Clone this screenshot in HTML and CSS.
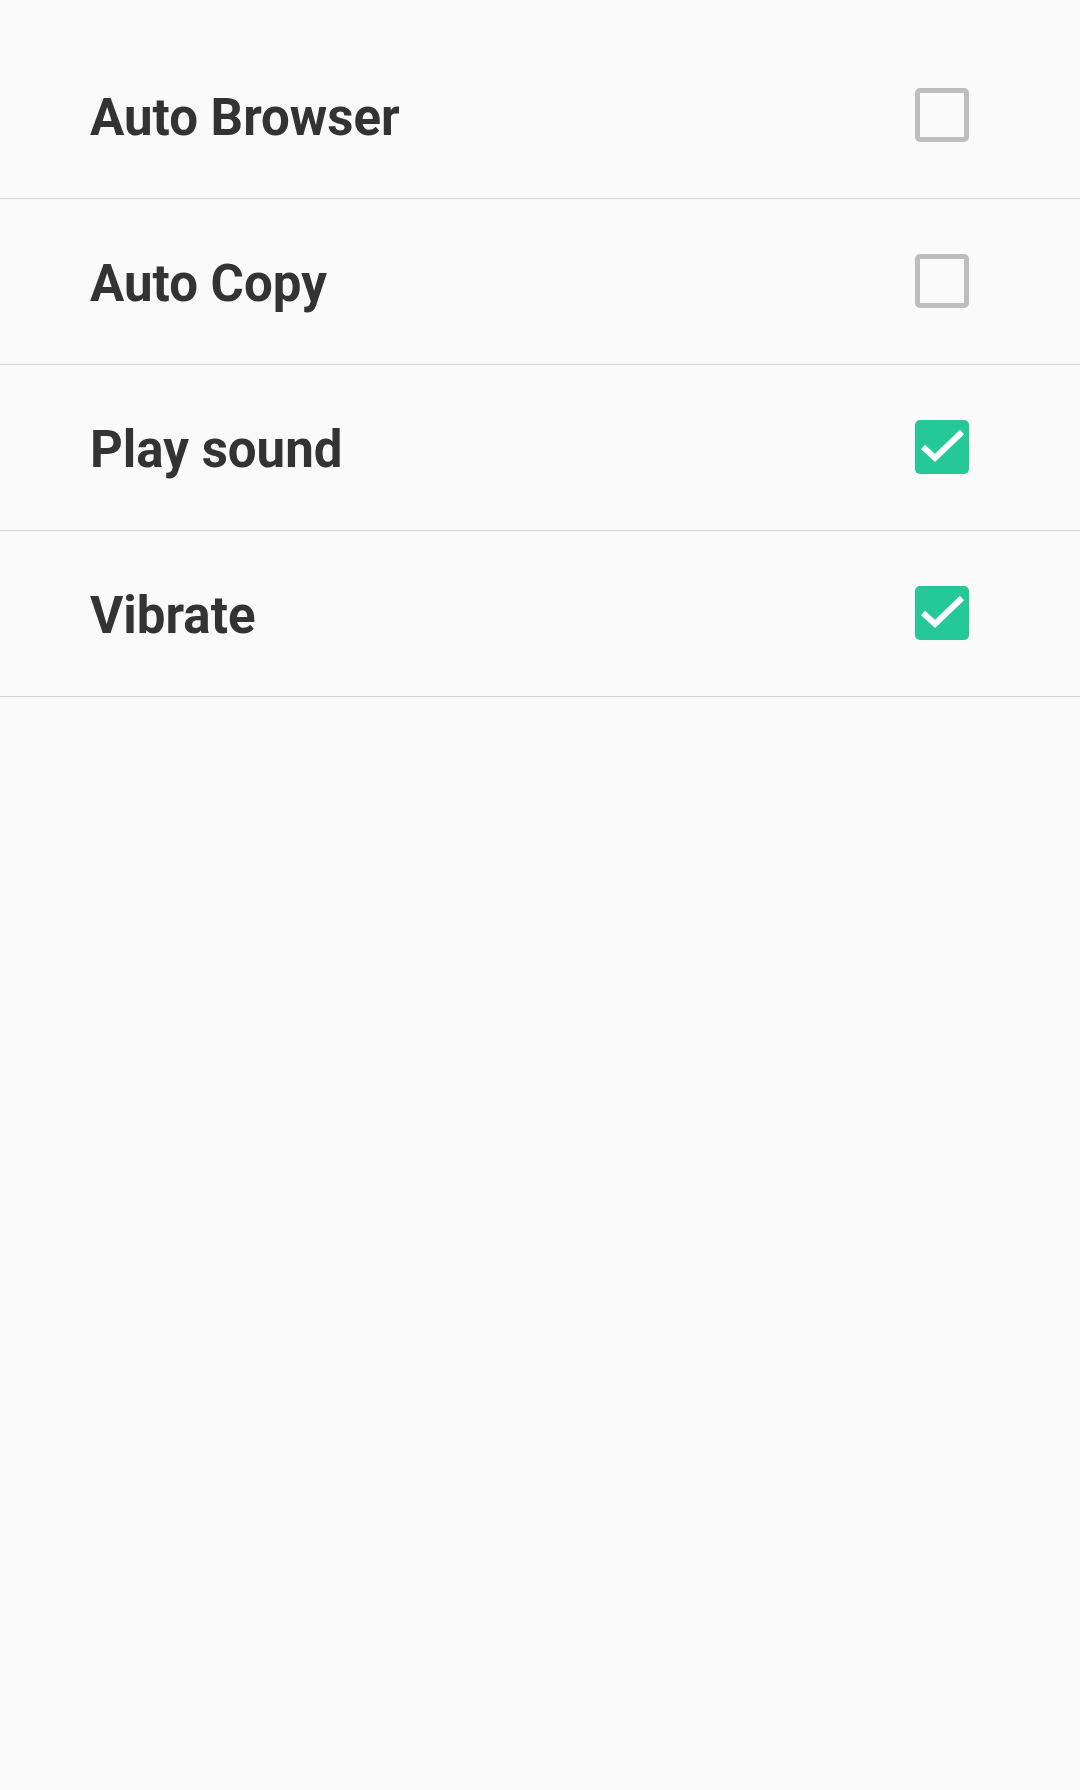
FILE: index.html
```html
<!DOCTYPE html>
<html lang="en">
<head>
    <meta charset="UTF-8">
    <meta name="viewport" content="width=device-width, initial-scale=1.0">
    <title>Settings</title>
    <link rel="stylesheet" href="styles.css">
</head>
<body>
    <ul class="settings">
        <li class="setting">
            <span class="label">Auto Browser</span>
            <span class="check"></span>
        </li>
        <li class="setting">
            <span class="label">Auto Copy</span>
            <span class="check"></span>
        </li>
        <li class="setting">
            <span class="label">Play sound</span>
            <span class="check checked">
                <svg viewBox="0 0 54 54"><path d="M8 27 L20 38 L47 12"/></svg>
            </span>
        </li>
        <li class="setting">
            <span class="label">Vibrate</span>
            <span class="check checked">
                <svg viewBox="0 0 54 54"><path d="M8 27 L20 38 L47 12"/></svg>
            </span>
        </li>
    </ul>
</body>
</html>
```

FILE: styles.css
```css
/* General */
body {
    margin: 0;
    padding: 0;
    background: #fafafa;
    font-family: 'Roboto', 'Liberation Sans', sans-serif;
    color: #333333;
}

.settings {
    list-style: none;
    margin: 0;
    padding: 33px 0 0;
}

.setting {
    display: flex;
    align-items: center;
    justify-content: space-between;
    height: 165px;
    padding: 0 111px 0 90px;
    border-bottom: 1px solid #d2d2d2;
}

.label {
    font-size: 51px;
    font-weight: bold;
    margin-top: 4px;
}

.check {
    box-sizing: border-box;
    width: 54px;
    height: 54px;
    margin-top: -2px;
    border: 5px solid #bdbdbd;
    border-radius: 5px;
}

.check.checked {
    border: none;
    background: #25c998;
}

.check svg {
    display: block;
    width: 54px;
    height: 54px;
}

.check path {
    fill: none;
    stroke: #ffffff;
    stroke-width: 6;
}
```
